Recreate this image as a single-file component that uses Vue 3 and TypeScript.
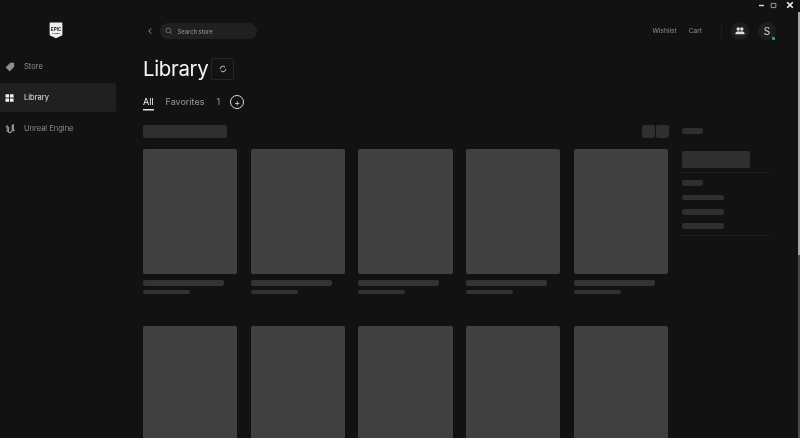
<script setup lang="ts">
const nav = [
  { label: 'Store', id: 'store' },
  { label: 'Library', id: 'library' },
  { label: 'Unreal Engine', id: 'ue' },
]
const cards: number[] = Array.from({ length: 10 }, (_, i) => i)
</script>

<template>
  <div class="app">
    <aside class="side">
      <div class="logo">
        <svg width="14" height="17" viewBox="0 0 16 20">
          <path d="M1.5 0.5h13a1 1 0 0 1 1 1V15.5L8 19.2 0.5 15.5V1.5a1 1 0 0 1 1-1z" fill="#eee" />
          <text x="8" y="10.5" class="logo-t1" text-anchor="middle">EPIC</text>
          <text x="8" y="14.5" class="logo-t2" text-anchor="middle">GAMES</text>
        </svg>
      </div>
      <nav class="nav">
        <a v-for="n in nav" :key="n.id" class="nav-item" :class="{ active: n.id === 'library' }">
          <svg v-if="n.id === 'store'" class="ni" width="10" height="10" viewBox="0 0 10 10">
            <path d="M5.2 0.8H9.2V4.8L4.8 9.4 0.6 5.4z" fill="#8e8e8e" />
          </svg>
          <svg v-else-if="n.id === 'library'" class="ni" width="10" height="10" viewBox="0 0 10 10">
            <path d="M0.5 1.2h3.6v3.4H0.5zM5 1.2h3.6v3.4H5zM0.5 5.4h3.6v3.4H0.5zM5 5.4h3.6v3.4H5z" fill="#f2f2f2" />
          </svg>
          <svg v-else class="ni" width="10" height="10" viewBox="0 0 10 10">
            <path d="M0.8 3.2L2.2 2V7.2L3.6 8V2.8M4 8.6C6 8.8 7 7.6 7.2 6V1.6L8.4 0.8V6.8L9.6 6" fill="none" stroke="#9a9a9a" stroke-width="1.1" />
          </svg>
          <span>{{ n.label }}</span>
        </a>
      </nav>
    </aside>

    <main class="main">
      <header class="top">
        <svg class="back" width="6" height="8" viewBox="0 0 6 8">
          <path d="M4.2 1.4L1.8 4l2.4 2.6" fill="none" stroke="#999" stroke-width="1" />
        </svg>
        <div class="search">
          <svg width="8" height="8" viewBox="0 0 8 8">
            <circle cx="3.4" cy="3.4" r="2.4" fill="none" stroke="#888" stroke-width=".7" />
            <path d="M5.2 5.2L7.2 7.2" stroke="#888" stroke-width=".7" />
          </svg>
          <span>Search store</span>
        </div>
        <div class="spacer"></div>
        <a class="link">Wishlist</a>
        <a class="link">Cart</a>
        <div class="vsep"></div>
        <div class="round">
          <svg width="10" height="8" viewBox="0 0 10 8">
            <circle cx="3.2" cy="2" r="1.7" fill="#ddd" />
            <circle cx="6.8" cy="2" r="1.7" fill="#ddd" />
            <path d="M0.3 7.2C0.3 5 1.8 4.2 3.2 4.2 4 4.2 4.6 4.4 5 4.8 5.4 4.4 6 4.2 6.8 4.2 8.2 4.2 9.7 5 9.7 7.2z" fill="#ddd" />
          </svg>
        </div>
        <div class="round avatar">S<i class="dot"></i></div>
      </header>

      <div class="title-row">
        <h1>Library</h1>
        <button class="refresh">
          <svg width="8" height="8" viewBox="0 0 8 8">
            <path d="M1.2 4A2.8 2.8 0 0 1 6.2 2.3M6.8 4A2.8 2.8 0 0 1 1.8 5.7" fill="none" stroke="#ccc" stroke-width="1" />
          </svg>
        </button>
      </div>

      <div class="tabs">
        <span class="tab on">All</span>
        <span class="tab">Favorites</span>
        <span class="tab">1</span>
        <span class="add">+</span>
      </div>

      <div class="body">
        <section class="lib">
          <div class="tools">
            <div class="sk sk-sort"></div>
            <div class="views"><div class="sk sk-view"></div><div class="sk sk-view"></div></div>
          </div>
          <div class="grid">
            <div v-for="c in cards" :key="c" class="card">
              <div class="cover"></div>
              <div class="sk l1"></div>
              <div class="sk l2"></div>
            </div>
          </div>
        </section>
        <section class="filters">
          <div class="sk f-head"></div>
          <div class="sk f-box"></div>
          <div class="rule"></div>
          <div class="sk f-head f-sub"></div>
          <div class="sk f-line"></div>
          <div class="sk f-line"></div>
          <div class="sk f-line"></div>
          <div class="rule rule2"></div>
        </section>
      </div>
    </main>

    <div class="win">
      <svg class="w-min" width="7" height="7" viewBox="0 0 7 7"><path d="M1 3.5h5" stroke="#ddd" stroke-width="1.4" /></svg>
      <svg class="w-max" width="7" height="7" viewBox="0 0 7 7"><path d="M1.2 1.4h4.6v4.2H1.2z" fill="none" stroke="#999" stroke-width="1" /></svg>
      <svg width="8" height="8" viewBox="0 0 8 8"><path d="M1.2 1.2l5.6 5.6M6.8 1.2L1.2 6.8" stroke="#f2f2f2" stroke-width="1.6" /></svg>
    </div>
    <div class="scrollbar"><div class="thumb"></div></div>
  </div>
</template>

<style>
html, body { margin: 0; background: #121212; overflow: hidden; }
</style>

<style scoped>
.app {
  position: relative;
  display: flex;
  width: 800px;
  height: 438px;
  overflow: hidden;
  background: #121212;
  font-family: Inter, "Liberation Sans", sans-serif;
  color: #fff;
}
.side { width: 116px; flex: none; will-change: transform; }
.logo { display: flex; justify-content: center; padding: 22px 5px 0 0; height: 52px; box-sizing: border-box; }
.logo-t1 { font: 700 5.2px "Liberation Sans", sans-serif; fill: #121212; }
.logo-t2 { font: 700 2.6px "Liberation Sans", sans-serif; fill: #121212; }
.nav { display: flex; flex-direction: column; gap: 2px; padding-top: 0; }
.nav-item {
  display: flex; align-items: center; gap: 9px; height: 29px; padding-left: 5px;
  font-size: 7.5px; color: #8f8f8f; border-radius: 0 3px 3px 0;
}
.nav-item.active { background: #202020; color: #e8e8e8; }
.ni { flex: none; }
.main { flex: 1; min-width: 0; padding-left: 27px; will-change: transform; }
.top { display: flex; align-items: center; height: 62px; box-sizing: border-box; padding-right: 24px; }
.back { margin-left: 4px; margin-right: 7px; }
.search {
  display: flex; align-items: center; gap: 5px; width: 97px; height: 16px; box-sizing: border-box;
  padding-left: 4.5px; border-radius: 8px; background: #202020; font-size: 5.8px; font-weight: 500; color: #8c8c8c;
}
.spacer { flex: 1; }
.link { font-size: 6.6px; color: #8f8f8f; margin-right: 13px; }
.link + .link { margin-right: 14px; margin-left: -1px; }
.vsep { width: 1px; height: 13px; background: #202020; margin: 0 0 0 5px; }
.round {
  position: relative; width: 18px; height: 18px; border-radius: 50%; background: #1e1e1e;
  display: flex; align-items: center; justify-content: center; margin-left: 9px;
}
.avatar { font-size: 10px; color: #ddd; }
.dot { position: absolute; right: 1px; bottom: 0; width: 3px; height: 3px; background: #27a04d; }
.title-row { display: flex; align-items: center; gap: 3px; height: 24px; margin-top: -5px; }
h1 { margin: 0; font-size: 20.4px; letter-spacing: -0.3px; font-weight: 400; line-height: 24px; color: #f5f5f5; }
.refresh {
  width: 23px; height: 22px; padding: 0; display: flex; align-items: center; justify-content: center;
  background: transparent; border: 1px solid #262626; border-radius: 2px;
}
.tabs { display: flex; align-items: center; margin-top: 12px; height: 18px; font-size: 9px; color: #999; }
.tab { margin-right: 12px; line-height: 14px; }
.tab.on { color: #f5f5f5; box-shadow: 0 1.5px 0 #e0e0e0; }
.add {
  width: 14px; height: 14px; box-sizing: border-box; border: 1px solid #ddd; border-radius: 50%;
  display: flex; align-items: center; justify-content: center; font-size: 9px; line-height: 1; color: #ddd; margin-left: -2px;
}
.body { display: flex; margin-top: 14px; }
.lib { width: 525.5px; flex: none; }
.tools { display: flex; justify-content: space-between; height: 13px; margin-bottom: 11px; }
.sk { background: #2f2f2f; border-radius: 2px; }
.sk-sort { width: 84px; height: 13px; }
.views { display: flex; gap: 1.5px; }
.sk-view { width: 12.5px; height: 12.5px; }
.grid { display: grid; grid-template-columns: repeat(5, 94.3px); column-gap: 13.4px; row-gap: 0; }
.card { height: 177px; }
.cover { height: 125px; background: #404040; border-radius: 2px; }
.l1 { width: 81px; height: 5.4px; margin-top: 6.3px; background: #333; }
.l2 { width: 47px; height: 4px; margin-top: 4.3px; background: #333; }
.filters { width: 89px; margin-left: 13.5px; padding-top: 3px; }
.f-head { width: 21px; height: 6px; }
.f-box { width: 68px; height: 17px; margin-top: 17px; }
.rule { height: 1px; background: #1f1f1f; margin-top: 4px; width: 90px; margin-left: -2px; }
.f-sub { margin-top: 7px; }
.f-line { width: 42px; height: 5.8px; margin-top: 8.5px; }
.rule2 { margin-top: 6px; }
.win { position: absolute; top: 1px; right: 6px; display: flex; align-items: center; gap: 9px; }
.w-min { margin-right: -4px; }
.scrollbar { position: absolute; top: 12px; right: 0; bottom: 0; width: 2px; background: #4a4a4a; }
.thumb { height: 243px; background: #a8a8a8; }
</style>
